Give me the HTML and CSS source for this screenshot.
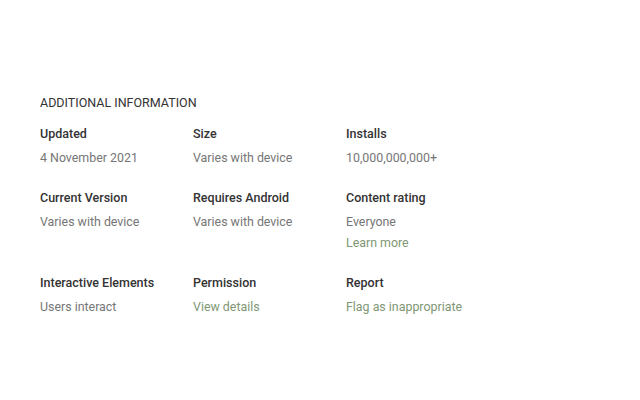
FILE: index.html
```html
<!DOCTYPE html>
<html>
<head>
<meta charset="utf-8">
<link rel="stylesheet" href="styles.css">
</head>
<body>
<section class="info">
  <h2 class="title">ADDITIONAL INFORMATION</h2>
  <div class="grid">
    <div class="cell"><div class="label">Updated</div><div class="value">4 November 2021</div></div>
    <div class="cell"><div class="label">Size</div><div class="value">Varies with device</div></div>
    <div class="cell"><div class="label">Installs</div><div class="value">10,000,000,000+</div></div>
    <div class="cell"><div class="label">Current Version</div><div class="value">Varies with device</div></div>
    <div class="cell"><div class="label">Requires Android</div><div class="value">Varies with device</div></div>
    <div class="cell"><div class="label">Content rating</div><div class="value">Everyone</div><div class="value link">Learn more</div></div>
    <div class="cell"><div class="label">Interactive Elements</div><div class="value">Users interact</div></div>
    <div class="cell"><div class="label">Permission</div><div class="value link">View details</div></div>
    <div class="cell"><div class="label">Report</div><div class="value link">Flag as inappropriate</div></div>
  </div>
</section>
</body>
</html>
```

FILE: styles.css
```css
html, body {
  margin: 0;
  padding: 0;
  background: #ffffff;
  font-family: Roboto, "Liberation Sans", Arial, sans-serif;
}
.info {
  padding: 93px 0 0 40px;
}
.title {
  margin: 0 0 11px 0;
  font-size: 12.5px;
  font-weight: 400;
  line-height: 20px;
  color: #333333;
}
.grid {
  display: grid;
  grid-template-columns: 153px 153px 153px;
  row-gap: 20px;
}
.label {
  font-size: 12.5px;
  font-weight: 500;
  line-height: 20px;
  color: #333333;
  margin-bottom: 3px;
}
.value {
  font-size: 12.4px;
  line-height: 21px;
  color: #767676;
}
.link {
  color: #7f9774;
}
```
